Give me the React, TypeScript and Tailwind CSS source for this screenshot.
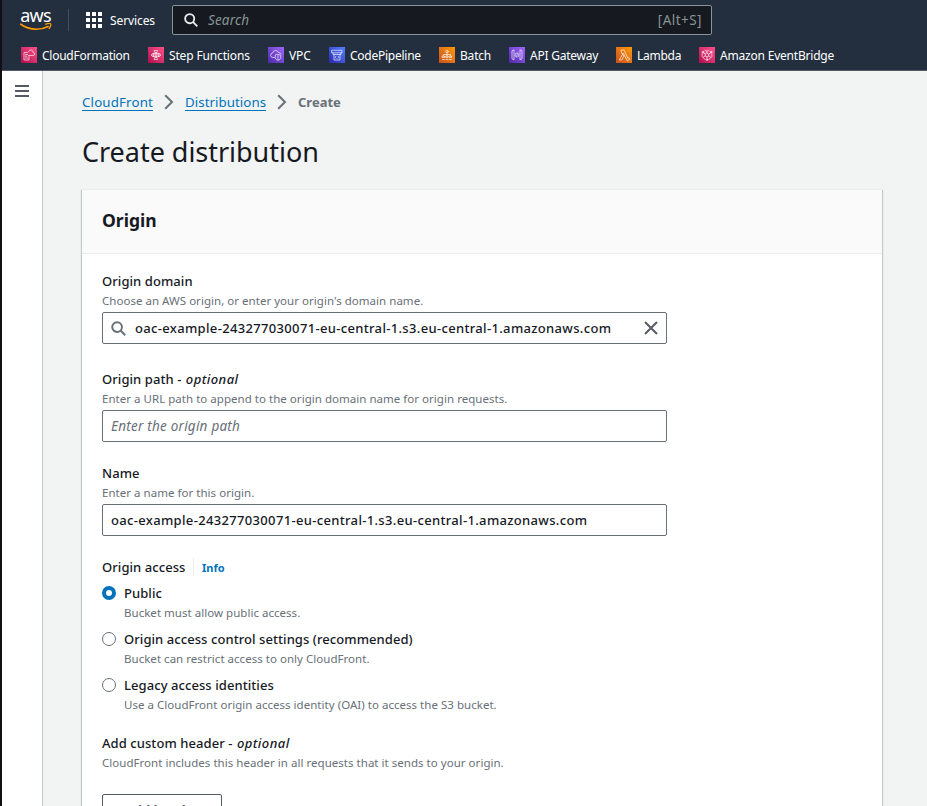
import type { ReactNode } from "react";

const stroke = { fill: "none", stroke: "#fff", strokeOpacity: 0.85, strokeWidth: 0.75, strokeLinejoin: "round" as const, strokeLinecap: "round" as const };

function ServiceIcon({ tint, children }: { tint: string; children: ReactNode }) {
  return (
    <span className={`block size-4 shrink-0 bg-linear-to-tr ${tint}`}>
      <svg viewBox="0 0 16 16" className="block size-4" {...stroke}>
        {children}
      </svg>
    </span>
  );
}

const pink = "from-[#b0084d] to-[#ff4f8b]";
const purple = "from-[#4d27a8] to-[#a166ff]";
const blue = "from-[#2e27ad] to-[#527fff]";
const orange = "from-[#c8511b] to-[#ff9900]";

const shortcuts = [
  {
    label: "CloudFormation", width: "w-[127px]", track: "tracking-[-0.25px]", tint: pink,
    art: <><path d="M6.500 5.500H3v7.500h5V9.500M4.500 7.500h2M4.500 9.200h1.500M4.500 11h2" /><path d="M7.500 8.500h4.500a1.500 1.500 0 0 0 .2-3A2.400 2.400 0 0 0 7.600 4.500" /></>,
  },
  {
    label: "Step Functions", width: "w-[120px]", track: "tracking-[-0.15px]", tint: pink,
    art: <><path d="M6.500 3.500h3L9 5.500H7zM6.500 12.500h3L9 10.500H7zM8 5.500v5M5 6.500h6M5 9.500h6M5 6.500L3 8l2 1.500zM11 6.500L13 8l-2 1.500zM5 8h6" /></>,
  },
  {
    label: "VPC", width: "w-[61px]", track: "tracking-[-0.1px]", tint: purple,
    art: <><path d="M6.500 10.500H5A2.200 2.200 0 0 1 4.700 6a3 3 0 0 1 5.800-.5A2.200 2.200 0 0 1 12.800 7" /><path d="M10 7.300l2.700 1v2.500c0 1.200-1.200 2-2.700 2.500-1.500-.5-2.700-1.300-2.700-2.500V8.300zM10 8.500v4" /></>,
  },
  {
    label: "CodePipeline", width: "w-[110px]", track: "tracking-[-0.25px]", tint: blue,
    art: <><path d="M3 3.300h10v2.500H3zM4 5.800v1.700h8V5.800M5 7.500V13h6V7.500M7 9.200l-.9 1L7 11.300M9 9.200l.9 1-.9 1.100" /></>,
  },
  {
    label: "Batch", width: "w-[70px]", track: "tracking-[-0.2px]", tint: orange,
    art: <><circle cx="8" cy="4.500" r="1.200" /><path d="M8 5.700V9M4.500 9V7.500h7V9M3.500 9h2v1.500h-2zM7 9h2v1.500H7zM10.500 9h2v1.500h-2zM3.500 12.500h2M7 12.500h2M10.500 12.500h2" /></>,
  },
  {
    label: "API Gateway", width: "w-[107px]", track: "tracking-[-0.23px]", tint: purple,
    art: <><path d="M5 3.200v9.600l-2-1V4.200zM11 3.200v9.600l2-1V4.200zM7 6L6 8l1 2M9 6l1 2-1 2M8.200 6l-.4 4" /></>,
  },
  {
    label: "Lambda", width: "w-[83px]", track: "tracking-[-0.25px]", tint: orange,
    art: <><path d="M5.500 3h2.600l3.700 8.200 1.300-.4.600 1.700-2.700 1L7.500 6.500H6zM6.500 7.500L3.300 13h2.400l2-3.500z" /></>,
  },
  {
    label: "Amazon EventBridge", width: "w-[140px]", track: "tracking-[-0.2px]", tint: pink,
    art: <><path d="M8 6l1.800 1v2L8 10 6.200 9V7zM6.200 7L4 5.500M9.800 7L12 5.500M8 10v2.500M6 3.200l2 1 2-1M3.200 6.500v3M12.800 6.500v3M4.200 10.500l2 2.200M11.800 10.500l-2 2.200M8 6V4.200M6.200 9L4 10.300M9.800 9l2.200 1.300" /><circle cx="4" cy="5" r=".9" /><circle cx="12" cy="5" r=".9" /><circle cx="8" cy="12.800" r=".7" /></>,
  },
];

function AwsLogo() {
  return (
    <div className="w-8 text-white">
      <div className="h-[14px] pr-[1px] text-center text-[18px] leading-[12px] tracking-[-0.8px]">aws</div>
      <svg viewBox="0 0 32 8" className="block h-2 w-8">
        <path d="M.8 1.200C9 7.200 20 7.700 28 3.400" fill="none" stroke="#f90" strokeWidth="1.700" strokeLinecap="round" />
        <path d="M25.800 1.200c2-.9 4.300-.8 4.800-.3s0 3-1.500 4.600" fill="none" stroke="#f90" strokeWidth="1.300" strokeLinecap="round" />
      </svg>
    </div>
  );
}

function SearchIcon({ className }: { className: string }) {
  return (
    <svg viewBox="0 0 16 16" className={className} fill="none" stroke="currentColor" strokeWidth="2.100">
      <circle cx="6.500" cy="6.500" r="5.200" />
      <path d="M10.200 10.200l5 5" />
    </svg>
  );
}

function TopBar() {
  return (
    <header className="h-[71px] border-b border-[#545b64] bg-[#232f3e] text-[12px] text-white">
      <div className="flex h-10 items-center pl-[18px]">
        <AwsLogo />
        <div className="ml-4 h-[22px] w-px bg-[#414d5c]" />
        <svg viewBox="0 0 16 16" className="ml-[17px] size-4" fill="#fff">
          {[0, 6, 12].map((y) => [0, 6, 12].map((x) => <rect key={`${x}-${y}`} x={x} y={y} width="4" height="4" />))}
        </svg>
        <span className="ml-2 w-[62px] pt-[2px] tracking-[-0.1px]">Services</span>
        <div className="flex h-[30px] w-[540px] items-center rounded-[2px] border border-[#879596] bg-[#16191f] pr-[9px] pl-[11px] text-[#879596]">
          <SearchIcon className="size-[14px] text-[#eaeded]" />
          <span className="ml-[10px] flex-1 pt-px text-[13.500px] tracking-[0.15px] italic">Search</span>
          <span className="pt-px text-[13.500px] tracking-[0.45px]">[Alt+S]</span>
        </div>
      </div>
      <nav className="flex h-[30px] items-center pl-[19px]">
        {shortcuts.map((s) => (
          <div key={s.label} className={`flex shrink-0 items-center gap-[5px] whitespace-nowrap ${s.width}`}>
            <ServiceIcon tint={s.tint}>{s.art}</ServiceIcon>
            <span className={`pt-[2px] ${s.track}`}>{s.label}</span>
          </div>
        ))}
      </nav>
    </header>
  );
}

function Chevron() {
  return (
    <svg viewBox="0 0 10 16" className="h-4 w-[10px]" fill="none" stroke="#687078" strokeWidth="2">
      <path d="M1.200 1.200L8 8l-6.800 6.800" />
    </svg>
  );
}

function Label({ children }: { children: ReactNode }) {
  return <div className="h-[22px] text-[13px] leading-[22px] font-medium tracking-[0.07px]">{children}</div>;
}

function Optional() {
  return <i className="ml-px tracking-[0.45px]">optional</i>;
}

function Hint({ children }: { children: ReactNode }) {
  return <div className="h-5 text-[11.500px] leading-[18px] tracking-[0.03px] text-[#687078]">{children}</div>;
}

const box = "flex h-8 w-[565px] items-center rounded-[2px] border border-[#687078] bg-white px-2 text-[13px] font-medium tracking-[0.335px]";

const options = [
  { label: "Public", hint: "Bucket must allow public access.", on: true },
  { label: "Origin access control settings (recommended)", hint: "Bucket can restrict access to only CloudFront.", on: false },
  { label: "Legacy access identities", hint: "Use a CloudFront origin access identity (OAI) to access the S3 bucket.", on: false },
];

export default function App() {
  return (
    <div className="h-[806px] w-[927px] overflow-hidden border-l-2 border-[#150e18] bg-[#f2f3f3] font-['Noto_Sans','Open_Sans',sans-serif] text-[#16191f]">
      <TopBar />
      <div className="flex h-[735px]">
        <aside className="w-[41px] shrink-0 border-r border-[#c4c8c8] bg-white pt-[14px] pl-[13px]">
          <div className="flex w-[14px] flex-col gap-[3px]">
            <div className="h-[2px] bg-[#545b64]" />
            <div className="h-[2px] bg-[#545b64]" />
            <div className="h-[2px] bg-[#545b64]" />
          </div>
        </aside>
        <main className="pt-[21px] pl-[39px]">
          <div className="flex h-5 items-center text-[13.300px] text-[#0073bb]">
            <span className="h-[18px] w-[71px] border-b border-[#0073bb] leading-[18px] tracking-[0.15px] whitespace-nowrap">CloudFront</span>
            <span className="mx-[11px]"><Chevron /></span>
            <span className="h-[18px] w-[81px] border-b border-[#0073bb] leading-[18px] tracking-[0.05px] whitespace-nowrap">Distributions</span>
            <span className="mx-[11px]"><Chevron /></span>
            <span className="pt-px text-[13px] font-bold text-[#687078]">Create</span>
          </div>
          <h1 className="mt-[21px] h-9 text-[27px] leading-[38px] tracking-[-0.03px]">Create distribution</h1>
          <section className="mt-5 h-[640px] w-[800px] border-t border-[#eaeded] bg-white shadow-[0_1px_1px_0_rgba(0,28,36,0.3),1px_1px_1px_0_rgba(0,28,36,0.15),-1px_1px_1px_0_rgba(0,28,36,0.15)]">
            <div className="flex h-[64px] items-center border-b border-[#eaeded] bg-[#fafafa] pb-[2px] pl-5 text-[17.500px] font-bold">Origin</div>
            <div className="pt-4 pl-5">
              <Label>Origin domain</Label>
              <Hint>Choose an AWS origin, or enter your origin's domain name.</Hint>
              <div className={box}>
                <SearchIcon className="size-[15px] text-[#687078]" />
                <span className="ml-[9px] flex-1 pt-px">oac-example-243277030071-eu-central-1.s3.eu-central-1.amazonaws.com</span>
                <svg viewBox="0 0 14 14" className="size-[14px]" stroke="#545b64" strokeWidth="2">
                  <path d="M1 1l12 12M13 1L1 13" />
                </svg>
              </div>
              <div className="mt-6">
                <Label>Origin path - <Optional /></Label>
                <Hint>Enter a URL path to append to the origin domain name for origin requests.</Hint>
                <div className={box}><span className="pt-px text-[13.500px] font-normal tracking-[0.23px] text-[#687078] italic">Enter the origin path</span></div>
              </div>
              <div className="mt-5">
                <Label>Name</Label>
                <Hint>Enter a name for this origin.</Hint>
                <div className={box}><span className="pt-px">oac-example-243277030071-eu-central-1.s3.eu-central-1.amazonaws.com</span></div>
              </div>
              <div className="mt-5 flex h-[26px] items-start">
                <div className="w-[91px]"><Label>Origin access</Label></div>
                <div className="mt-[2px] h-[18px] w-px bg-[#eaeded]" />
                <span className="ml-2 text-[11px] leading-[24px] font-bold text-[#0073bb]">Info</span>
              </div>
              {options.map((o) => (
                <div key={o.label} className="flex h-[46px] items-start gap-2">
                  <span className={`mt-1 size-[14px] shrink-0 rounded-full bg-white ${o.on ? "border-4 border-[#0073bb]" : "border border-[#687078]"}`} />
                  <div>
                    <Label>{o.label}</Label>
                    <Hint>{o.hint}</Hint>
                  </div>
                </div>
              ))}
              <div className="mt-3">
                <Label>Add custom header - <Optional /></Label>
                <Hint>CloudFront includes this header in all requests that it sends to your origin.</Hint>
              </div>
              <button className="mt-5 flex h-8 w-[120px] items-center justify-center rounded-[2px] border border-[#545b64] pt-px text-[13px] font-bold text-[#545b64]">Add header</button>
            </div>
          </section>
        </main>
      </div>
    </div>
  );
}
